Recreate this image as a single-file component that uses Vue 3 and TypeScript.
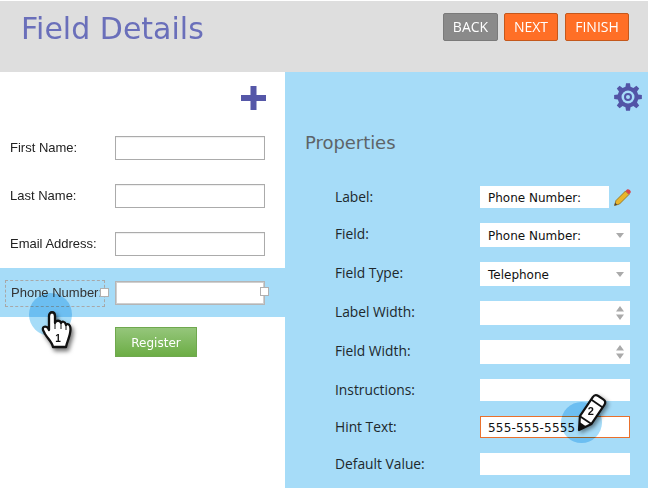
<script setup lang="ts">
const leftFields = ['First Name:', 'Last Name:', 'Email Address:']

type Row = { label: string; kind: 'text' | 'select' | 'number'; value?: string; short?: boolean; accent?: boolean }
const rows: Row[] = [
  { label: 'Label:', kind: 'text', value: 'Phone Number:', short: true },
  { label: 'Field:', kind: 'select', value: 'Phone Number:' },
  { label: 'Field Type:', kind: 'select', value: 'Telephone' },
  { label: 'Label Width:', kind: 'number' },
  { label: 'Field Width:', kind: 'number' },
  { label: 'Instructions:', kind: 'text' },
  { label: 'Hint Text:', kind: 'text', value: '555-555-5555', accent: true },
  { label: 'Default Value:', kind: 'text' },
]

function gearPath(): string {
  const cx = 14, cy = 14, teeth = 8, ro = 14, ri = 10.5
  const pts: string[] = []
  for (let i = 0; i < teeth; i++) {
    const a = (i * 2 * Math.PI) / teeth - Math.PI / 2
    const s = Math.PI / teeth
    const pairs: [number, number][] = [
      [ri, a - s * 0.62], [ro, a - s * 0.36], [ro, a + s * 0.36], [ri, a + s * 0.62],
    ]
    for (const [r, t] of pairs) {
      pts.push(`${(cx + r * Math.cos(t)).toFixed(2)} ${(cy + r * Math.sin(t)).toFixed(2)}`)
    }
  }
  return 'M' + pts.join('L') + 'Z'
}
const gear = gearPath()
</script>

<template>
  <div class="page">
    <header class="top">
      <h1 class="title">Field Details</h1>
      <div class="actions">
        <button class="btn grey">BACK</button>
        <button class="btn orange next">NEXT</button>
        <button class="btn orange finish">FINISH</button>
      </div>
    </header>

    <div class="body">
      <section class="left">
        <div class="plus-row">
          <svg class="plus" width="25" height="24" viewBox="0 0 25 24"><path d="M9.5 0h6v9h9.5v6h-9.5v9h-6v-9H0V9h9.5z" fill="#5557a8"/></svg>
        </div>
        <div class="form">
          <div v-for="f in leftFields" :key="f" class="lrow">
            <span class="llabel">{{ f }}</span>
            <input class="linput" type="text" />
          </div>
        </div>
        <div class="band">
          <div class="dashed">
            <span class="dashed-text">Phone Number:</span>
            <i class="handle label-handle"></i>
          </div>
          <div class="band-field">
            <input class="linput active" type="text" />
            <i class="handle field-handle"></i>
          </div>
        </div>
        <button class="register">Register</button>

        <div class="pulse one"></div>
        <svg class="hand" width="38" height="46" viewBox="0 0 38 46">
          <path d="M9 8C9 3 15 3 15 8L15 15C16 12 20 12 21 15C22 13 25 13 26 17C27 15 30.5 16 30.5 21C30.5 28 27 33 26 39L13 39C12 34 8 31 5 26L3 22C2 18 6 18 8 20L9 22Z" fill="#fff" stroke="#111" stroke-width="2.3" stroke-linejoin="round"/>
          <path d="M15 15V21M21 15V21M26 17V22" stroke="#111" stroke-width="1" fill="none"/>
          <text x="18" y="34" class="mark">1</text>
        </svg>
      </section>

      <section class="right">
        <svg class="gear" width="28" height="28" viewBox="0 0 28 28">
          <path :d="gear" fill="#5254a6"/>
          <circle cx="14" cy="14" r="6.5" fill="#a6dcf8"/>
          <circle cx="14" cy="14" r="3" fill="#a6dcf8" stroke="#5254a6" stroke-width="2"/>
        </svg>
        <h2 class="props">Properties</h2>
        <div class="rows">
          <div v-for="r in rows" :key="r.label" class="row">
            <span class="rlabel" :class="{ raised: r.kind !== 'text' }">{{ r.label }}</span>
            <div class="control" :class="[r.kind, { short: r.short, accent: r.accent }]">
              <span class="val">{{ r.value }}</span>
              <svg v-if="r.kind === 'select'" class="arrow" width="10" height="5" viewBox="0 0 10 5"><path d="M1 0h8L5 5z" fill="#aaa"/></svg>
              <svg v-if="r.kind === 'number'" class="arrow" width="10" height="14" viewBox="0 0 10 14"><path d="M1 5.5h8L5 0zM1 8.5h8L5 14z" fill="#aaa"/></svg>
            </div>
            <svg v-if="r.short" class="edit" width="17" height="17" viewBox="0 0 17 17">
              <path d="M0.5 16.5L2 11.5L11.5 2L15 5.5L5.5 15Z" fill="#e9b52c" stroke="#8a6a1c" stroke-width="0.8"/>
              <path d="M11.5 2L13 0.6C13.8 0 14.5 0 15.4 0.8L16.2 1.6C17 2.5 17 3.2 16.4 4L15 5.5Z" fill="#d8454a"/>
              <path d="M0.5 16.5L1.2 13.8L3.2 15.8Z" fill="#444"/>
            </svg>
          </div>
        </div>

        <div class="pulse two"></div>
        <svg class="pencil" width="34" height="42" viewBox="0 0 34 42">
          <g transform="translate(3 38) rotate(34)">
            <path d="M0 0L-7 -12V-35Q-7 -39 -3 -39H3Q7 -39 7 -35V-12Z" fill="#fff" stroke="#111" stroke-width="2.2" stroke-linejoin="round"/>
            <path d="M0 0L-4 -7H4Z" fill="#111"/>
            <path d="M-7 -12H7M-7 -32H7" stroke="#111" stroke-width="1.8"/>
          </g>
          <text x="14.7" y="23" class="mark big">2</text>
        </svg>
      </section>
    </div>
  </div>
</template>

<style>
html, body { margin: 0; background: #fff; }
</style>

<style scoped>
.page {
  width: 648px;
  height: 488px;
  padding-top: 1px;
  box-sizing: border-box;
  display: flex;
  flex-direction: column;
  overflow: hidden;
  font-family: "Liberation Sans", sans-serif;
}
.top {
  height: 71px;
  flex: none;
  background: #dedede;
  display: flex;
  justify-content: space-between;
  align-items: flex-start;
  padding: 12px 19px 0 21px;
  box-sizing: border-box;
}
.title {
  margin: 0;
  font: 400 30px/32px "DejaVu Sans", sans-serif;
  color: #6a6fba;
}
.actions { display: flex; gap: 6px; }
.btn {
  height: 28px;
  border-radius: 2px;
  color: #fff;
  font: 400 14px/26px "Open Sans", sans-serif;
  padding: 0;
  cursor: pointer;
}
.grey { width: 55px; background: #8a8a8a; border: 1px solid #7a7a7a; }
.orange { background: #ff6f26; border: 1px solid #c4581c; }
.next { width: 54px; }
.finish { width: 64px; margin-left: 1px; }
.body { flex: 1; display: flex; min-height: 0; }
.left {
  width: 285px;
  flex: none;
  background: #fff;
  position: relative;
}
.plus-row { display: flex; justify-content: flex-end; padding: 14px 19px 26px 0; }
.plus { display: block; }
.form { display: flex; flex-direction: column; gap: 24px; padding-left: 10px; }
.lrow { display: flex; align-items: center; height: 24px; }
.llabel { width: 105px; font-size: 13px; color: #222; padding-bottom: 2px; }
.linput {
  width: 150px;
  height: 24px;
  box-sizing: border-box;
  border: 1px solid #ababab;
  box-shadow: inset 0 1px 1px #eee;
  background: #fff;
  padding: 0;
  margin: 0;
  outline: none;
}
.band {
  margin-top: 12px;
  height: 49px;
  background: #a6dcf8;
  display: flex;
  align-items: center;
  padding-left: 5px;
}
.dashed {
  width: 100px;
  height: 27px;
  box-sizing: border-box;
  border: 1px dashed #a8a8a8;
  display: flex;
  align-items: center;
  padding-left: 5px;
  font-size: 13px;
  color: #333;
  white-space: nowrap;
  position: relative;
  margin-top: 1px;
}
.dashed-text { padding-bottom: 2px; }
.band-field { margin-left: 10px; position: relative; display: flex; }
.active { border-color: #b5b5b5; box-shadow: inset 0 0 0 1px #cfcfcf; }
.handle {
  position: absolute;
  width: 9px;
  height: 9px;
  background: #fff;
  border: 1px solid #b0b0b0;
  box-sizing: border-box;
}
.label-handle { left: 94px; top: 7px; }
.field-handle { left: 145px; top: 6px; }
.register {
  display: block;
  margin: 10px 0 0 115px;
  width: 82px;
  height: 30px;
  box-sizing: border-box;
  border: 1px solid #6fa84e;
  background: linear-gradient(#95c67b, #6cad45);
  color: #fff;
  font: 400 12px/28px "DejaVu Sans", sans-serif;
  padding: 1px 0 0;
  cursor: pointer;
}
.pulse { position: absolute; border-radius: 50%; background: #a6dcf8; mix-blend-mode: multiply; }
.pulse.one { left: 29px; top: 221px; width: 43px; height: 43px; }
.hand {
  position: absolute;
  left: 40px;
  top: 236px;
  filter: drop-shadow(2px 3px 2px rgba(0, 0, 0, 0.55));
}
.mark { font: 700 10px "Liberation Sans", sans-serif; fill: #111; text-anchor: middle; }
.mark.big { font-size: 11px; }
.right {
  flex: 1;
  background: #a6dcf8;
  position: relative;
  padding-left: 20px;
}
.gear { position: absolute; right: 6px; top: 11px; }
.props {
  margin: 0;
  padding-top: 59px;
  font: 400 18px/24px "DejaVu Sans", sans-serif;
  letter-spacing: -0.05px;
  color: #5d6468;
}
.rows {
  margin-top: 31px;
  display: flex;
  flex-direction: column;
  gap: 15px;
  padding-left: 30px;
}
.row { display: flex; align-items: center; }
.rlabel {
  width: 145px;
  flex: none;
  font: 400 13.8px/20px "Open Sans", sans-serif;
  color: #20282c;
}
.rlabel.raised { padding-bottom: 2px; }
.control {
  width: 150px;
  height: 24px;
  box-sizing: border-box;
  background: #fff;
  display: flex;
  align-items: center;
  justify-content: space-between;
  padding: 0 8px;
  font: 400 12px/20px "DejaVu Sans", sans-serif;
  color: #111;
}
.val { padding-top: 2px; }
.control.text { height: 22px; }
.control.short { width: 129px; }
.control.accent { border: 1px solid #e9702c; padding: 0 7px; letter-spacing: 0.2px; }
.arrow { flex: none; margin-right: -3px; }
.edit { margin-left: 5px; }
.pulse.two { left: 276px; top: 330px; width: 41px; height: 41px; }
.pencil {
  position: absolute;
  left: 291px;
  top: 320px;
  filter: drop-shadow(2px 2px 2px rgba(0, 0, 0, 0.45));
}
</style>
